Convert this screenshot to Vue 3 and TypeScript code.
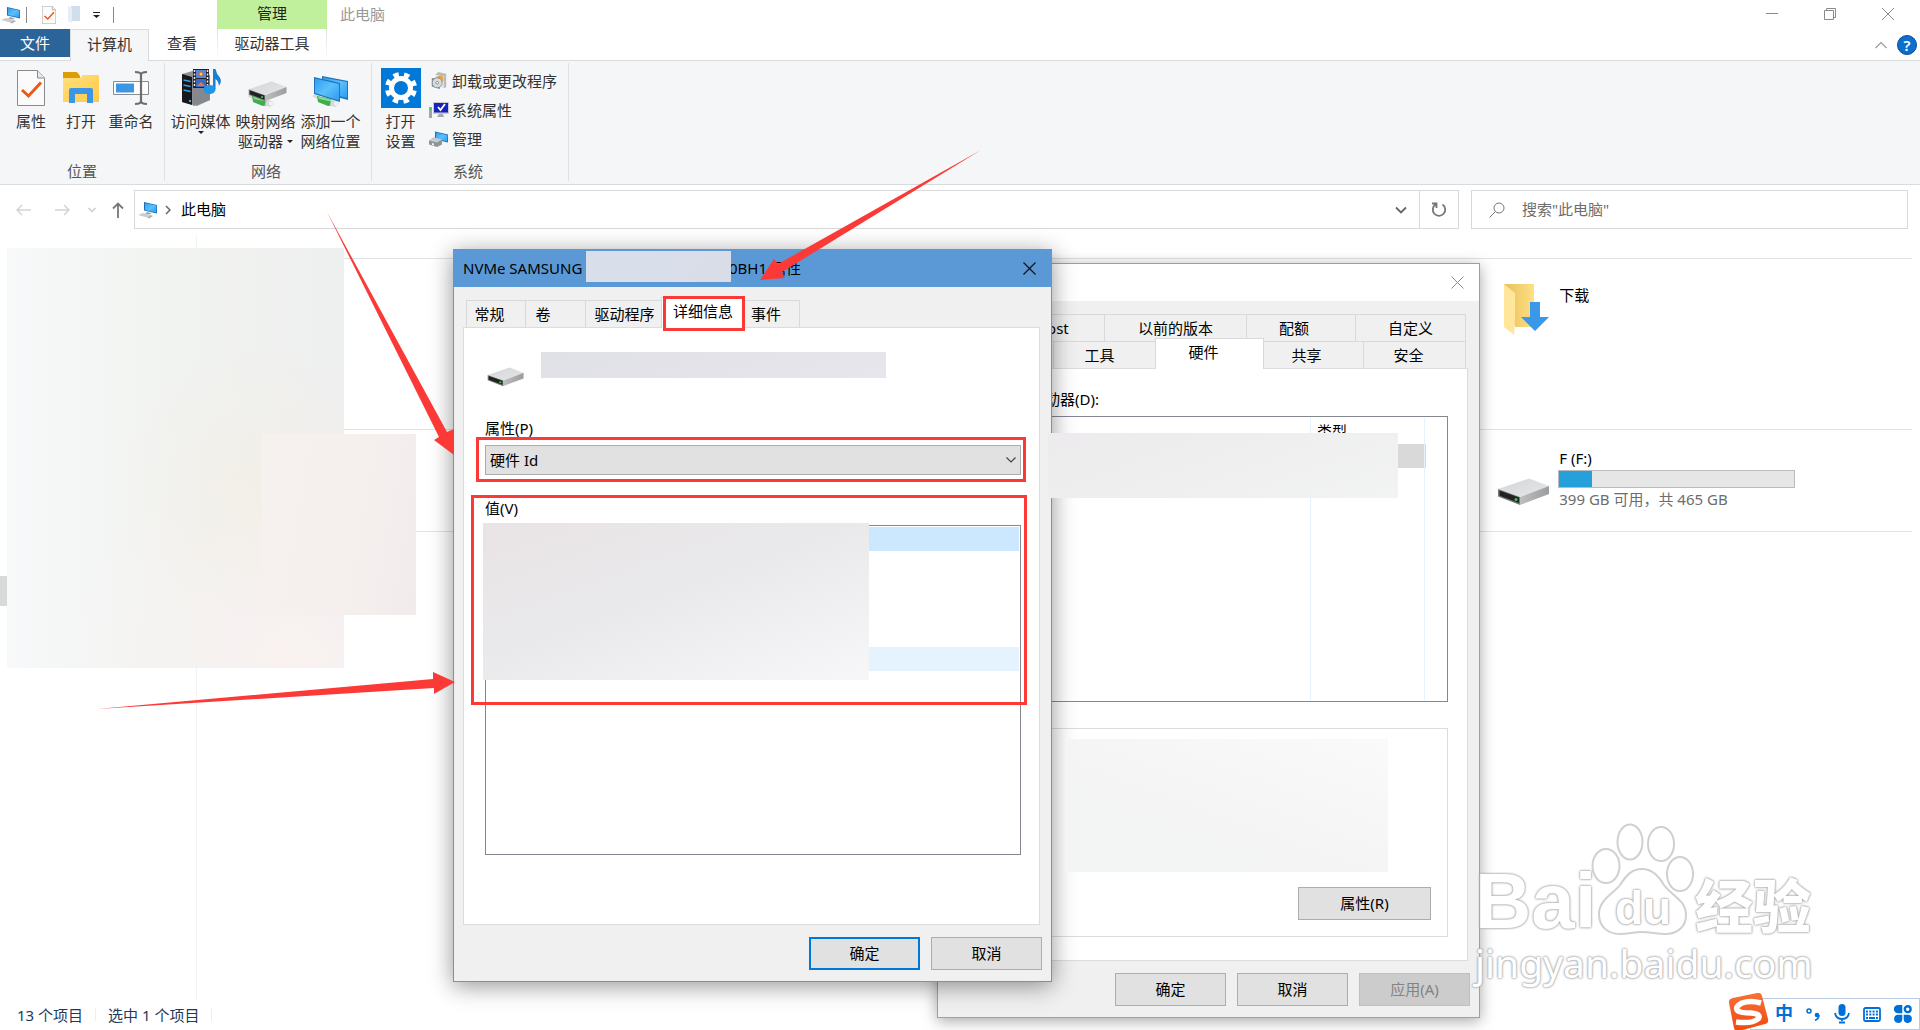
<script setup lang="ts">
import { ref } from 'vue'

interface SmallAction {
  icon: string
  label: string
}

const smallActions: SmallAction[] = [
  { icon: 'uninstall', label: '卸载或更改程序' },
  { icon: 'sysprops', label: '系统属性' },
  { icon: 'manage', label: '管理' },
]

const detailTabs = [
  { label: '常规', cls: 'w-general' },
  { label: '卷', cls: 'w-volume' },
  { label: '驱动程序', cls: 'w-driver' },
  { label: '详细信息', cls: 'w-detail' },
  { label: '事件', cls: 'w-event' },
]
const activeDetail = ref('详细信息')

const property = ref('硬件 Id')
const usedPercent = 14
const valueRows = ['selected', '', '', '', '', 'hovered']
</script>

<template>
  <div class="desktop">
    <svg class="defs" width="0" height="0" aria-hidden="true">
      <defs>
        <linearGradient id="gScreen" x1="0" y1="0" x2="1" y2="1">
          <stop offset="0" stop-color="#2f9df0" /><stop offset=".5" stop-color="#5cc0fb" /><stop offset="1" stop-color="#2c9cf0" />
        </linearGradient>
        <linearGradient id="gTop" x1="0" y1="0" x2="1" y2="1">
          <stop offset="0" stop-color="#d4d5d7" /><stop offset="1" stop-color="#e6e7e9" />
        </linearGradient>
        <linearGradient id="gSide" x1="0" y1="0" x2="1" y2="0">
          <stop offset="0" stop-color="#bdbec0" /><stop offset="1" stop-color="#9c9d9f" />
        </linearGradient>
        <linearGradient id="gFolder" x1="0" y1="0" x2="1" y2="1">
          <stop offset="0" stop-color="#ffe07c" /><stop offset="1" stop-color="#ffc94a" />
        </linearGradient>
        <linearGradient id="gFolderBack" x1="0" y1="0" x2="1" y2="0">
          <stop offset="0" stop-color="#e8bf5c" /><stop offset="1" stop-color="#ffe083" />
        </linearGradient>
        <linearGradient id="gOrange" x1="0" y1="0" x2="0" y2="1">
          <stop offset="0" stop-color="#f8703a" /><stop offset="1" stop-color="#f04a0c" />
        </linearGradient>
        <symbol id="pc" viewBox="0 0 20 18">
          <path d="M6 1 19 4v8.500L6 9.500z" fill="#1d6fb5" />
          <path d="M7 2l11.300 2.600v7L7 9z" fill="url(#gScreen)" />
          <path d="M9 11l5 1.500-3 1-4-1z" fill="#9aa3ab" />
          <path d="M0 14l5-2 8 2-4 2.500z" fill="#c9ced3" /><path d="M9 16.500 13 14l2 1-4 2.500z" fill="#aab1b8" />
        </symbol>
        <symbol id="drive" viewBox="0 0 54 28">
          <path d="M1 11 32 0.500 52 8 23 19z" fill="url(#gTop)" />
          <path d="M23 19 52 8v8L23 27z" fill="url(#gSide)" />
          <path d="M1 11l22 8v8L1 18.500z" fill="#77797b" />
          <path d="M2.500 12.500 22 19.500v5.500L2.500 17.800z" fill="#222" />
          <circle cx="19" cy="21.500" r="1.500" fill="#34d13c" />
        </symbol>
        <symbol id="netbase" viewBox="0 0 30 14">
          <path d="M1 3l4-2 5 2-4 3z" fill="#d9dbdd" /><path d="M6 3l14 3 2 6-5 1L7 9z" fill="#3fae4b" />
          <path d="M7 3.500l13 3v2L8 6z" fill="#86dd8c" />
          <path d="M20 7l6 1 2 3-4 3-5-2z" fill="#d6d8da" /><circle cx="25" cy="10.500" r="2" fill="#f5f5f5" />
        </symbol>
        <symbol id="doc" viewBox="0 0 28 36">
          <path d="M.5.5h20L27.500 8v27.500H.5z" fill="#fbfbfb" stroke="#8b8b8b" />
          <path d="M20.500.5V8h7" fill="#e8e8e8" stroke="#8b8b8b" />
          <path d="M5 20l6.500 6L24 12.500" fill="none" stroke="#ea5a14" stroke-width="3" />
        </symbol>
        <symbol id="uninstall" viewBox="0 0 18 20">
          <path d="M5 3l3-3 9 2v15l-3 1V5z" fill="#b9bbbd" /><path d="M5 3l9 2v13l-9-2z" fill="#e7e7e7" />
          <circle cx="10" cy="8" r="4" fill="#f2a23a" /><path d="M1 7l9-1v13l-9-3z" fill="#79868c" />
          <circle cx="7" cy="12" r="5.500" fill="#d5dce0" stroke="#87939a" /><circle cx="7" cy="12" r="1.500" fill="#fff" stroke="#888" />
        </symbol>
        <symbol id="sysprops" viewBox="0 0 20 18">
          <path d="M0 6h3v11H0z" fill="#9fa5a8" /><path d="M1 7h1v2H1z" fill="#2bd12b" />
          <path d="M4 1h16v12H4z" fill="#c9cdd2" /><path d="M5 2h14v9.500H5z" fill="#1723bb" />
          <path d="M9 6l2.500 3L16 3" fill="none" stroke="#fff" stroke-width="1.800" />
          <path d="M10 13h4l1 3H8z" fill="#a6abb0" />
        </symbol>
        <symbol id="manage" viewBox="0 0 20 17">
          <path d="M6 1l13 3v8L6 9z" fill="#1d6fb5" /><path d="M7 2l11.300 2.700v6.400L7 8.500z" fill="url(#gScreen)" />
          <path d="M0 10l5-3 8 2v5l-5 2.500L0 14z" fill="#8d959c" /><path d="M0 10l5-3 8 2-5 3z" fill="#c5cacf" />
          <path d="M3 12.500l2 .6v2l-2-.6z" fill="#eee" />
        </symbol>
      </defs>
    </svg>

    <div class="explorer">
      <header class="titlebar">
        <div class="quick">
          <svg width="20" height="18"><use href="#pc" /></svg>
          <i class="qsep"></i>
          <svg class="q-doc" width="14" height="18"><use href="#doc" /></svg>
          <svg class="q-folder" width="13" height="17" viewBox="0 0 13 17"><path d="M3 0h9v15H3z" fill="#d2deec" /><path d="M0 0l4 2v15l-4-2z" fill="#e6edf6" /></svg>
          <svg class="q-more" width="7" height="6" viewBox="0 0 7 6"><path d="M0 0h7v1H0zM0 3h7L3.500 6z" fill="#222" /></svg>
          <i class="qsep"></i>
        </div>
        <div class="context-head">管理</div>
        <div class="win-title">此电脑</div>
        <div class="win-buttons">
          <button aria-label="最小化"><svg width="12" height="12" viewBox="0 0 12 12"><path d="M0 5.500h12" stroke="#8a8a8a" /></svg></button>
          <button aria-label="还原"><svg width="12" height="12" viewBox="0 0 12 12"><path d="M.5 2.500h9v9h-9zM2.500 2.500v-2h9v9h-2" fill="none" stroke="#8a8a8a" /></svg></button>
          <button aria-label="关闭"><svg width="12" height="12" viewBox="0 0 12 12"><path d="M0 0l12 12M12 0 0 12" stroke="#8a8a8a" /></svg></button>
        </div>
      </header>

      <nav class="ribbon-tabs">
        <button class="rt file">文件</button>
        <button class="rt computer">计算机</button>
        <button class="rt view">查看</button>
        <button class="rt tools">驱动器工具</button>
        <div class="ribbon-end">
          <svg width="12" height="8" viewBox="0 0 12 8"><path d="M.5 7 6 1.500 11.500 7" fill="none" stroke="#9a9a9a" stroke-width="1.200" /></svg>
          <span class="help">?</span>
        </div>
      </nav>

      <section class="ribbon">
        <div class="group g-place">
          <div class="actions">
            <button class="big"><svg width="28" height="36"><use href="#doc" /></svg><span>属性</span></button>
            <button class="big">
              <svg width="36" height="32" viewBox="0 0 36 32"><path d="M0 0h14l3 4v4H0z" fill="#dd9c08" /><path d="M0 6h17l3-3h16v27H0z" fill="url(#gFolder)" /><path d="M6 31V18q0-2 2-2h20q2 0 2 2v13h-6v-9H12v9z" fill="#3b97e3" /></svg>
              <span>打开</span>
            </button>
            <button class="big">
              <svg width="36" height="34" viewBox="0 0 36 34"><path d="M.5 10.500h35v13H.5z" fill="#fff" stroke="#8b8b8b" /><path d="M3 12.500h18v9H3z" fill="#3b97e3" /><path d="M28 3v28M22 1q6 0 6 3 0-3 6-3M22 33q6 0 6-3 0 3 6 3" fill="none" stroke="#6e6e6e" stroke-width="2.200" /></svg>
              <span>重命名</span>
            </button>
          </div>
          <div class="caption">位置</div>
        </div>

        <div class="group g-net">
          <div class="actions">
            <button class="big media">
              <svg width="40" height="40" viewBox="0 0 40 40">
                <path d="M1 6l14-4 14 5v25l-13 6L1 34z" fill="#8f9296" /><path d="M1 6l10 3v28L1 34z" fill="#16181b" /><path d="M11 9l18-2v25l-17 6z" fill="#85888d" />
                <path d="M2.500 12l7 1.500M2.500 17l7 1.500M2.500 22l7 1.500" stroke="#3aa0e8" stroke-width="1.500" /><circle cx="9" cy="33" r="1" fill="#6cd6ff" />
                <path d="M12 1h16v19H12z" fill="#222" /><path d="M15 2h10v8H15z" fill="#5a86d8" /><path d="M15 11h10v8H15z" fill="#3d69c4" /><path d="M16 8l4-5 4 5z" fill="#e0593a" /><path d="M16 18l4-4 4 4z" fill="#e8763a" /><circle cx="20" cy="6" r="1.500" fill="#ffd53a" />
                <path d="M13.500 2v17M26.500 2v17" stroke="#eee" stroke-width="1.500" stroke-dasharray="2 1.500" />
                <path d="M32 1h2.500q1 5 4 8 3 4-.5 9-.5-5-3.500-7V21H32z" fill="#1582d3" /><ellipse cx="28.500" cy="21.500" rx="6" ry="4.500" fill="#2196e8" />
              </svg>
              <span>访问媒体</span>
              <svg class="caret" width="6" height="3" viewBox="0 0 6 3"><path d="M0 0h6L3 3z" fill="#222" /></svg>
            </button>
            <button class="big">
              <span class="stack"><svg class="nb" width="30" height="14"><use href="#netbase" /></svg><svg class="dr" width="40" height="21"><use href="#drive" /></svg></span>
              <span>映射网络<br />驱动器<svg class="inline-caret" width="6" height="3" viewBox="0 0 6 3"><path d="M0 0h6L3 3z" fill="#222" /></svg></span>
            </button>
            <button class="big">
              <span class="stack"><svg class="nb" width="30" height="14"><use href="#netbase" /></svg>
                <svg class="mon" width="36" height="28" viewBox="0 0 36 28"><path d="M9 1l26 5v19L9 18z" fill="#1c74bc" /><path d="M10 2.500 34 7v16L10 17z" fill="url(#gScreen)" /><path d="M1 2l26 6v19L1 19z" fill="#1c74bc" /><path d="M2 3.500l24 5.500v16.500L2 18z" fill="url(#gScreen)" /></svg></span>
              <span>添加一个<br />网络位置</span>
            </button>
          </div>
          <div class="caption">网络</div>
        </div>

        <div class="group g-sys">
          <div class="actions">
            <button class="big">
              <svg width="40" height="40" viewBox="0 0 40 40"><path d="M0 0h40v40H0z" fill="#0078d7" /><circle cx="20" cy="20" r="9.500" fill="none" stroke="#fff" stroke-width="5" /><circle cx="20" cy="20" r="13.500" fill="none" stroke="#fff" stroke-width="5" stroke-dasharray="5.300 5.303" stroke-dashoffset="-2.650" /></svg>
              <span>打开<br />设置</span>
            </button>
            <ul class="small-list">
              <li v-for="a in smallActions" :key="a.label">
                <button class="small"><svg width="20" height="18"><use :href="'#' + a.icon" /></svg><span>{{ a.label }}</span></button>
              </li>
            </ul>
          </div>
          <div class="caption">系统</div>
        </div>
      </section>

      <div class="address-row">
        <div class="nav-arrows">
          <button aria-label="后退"><svg width="16" height="12" viewBox="0 0 16 12"><path d="M15 6H1M6 1 1 6l5 5" fill="none" stroke="#d4d4d4" stroke-width="1.500" /></svg></button>
          <button aria-label="前进"><svg width="16" height="12" viewBox="0 0 16 12"><path d="M1 6h14M10 1l5 5-5 5" fill="none" stroke="#d4d4d4" stroke-width="1.500" /></svg></button>
          <button aria-label="最近"><svg width="8" height="6" viewBox="0 0 8 6"><path d="M.5 1 4 4.500 7.500 1" fill="none" stroke="#ccc" stroke-width="1.500" /></svg></button>
          <button aria-label="上移"><svg width="12" height="16" viewBox="0 0 12 16"><path d="M6 16V1M1 6.500 6 1.500l5 5" fill="none" stroke="#777" stroke-width="1.800" /></svg></button>
        </div>
        <div class="address">
          <svg width="20" height="18"><use href="#pc" /></svg>
          <svg class="crumb" width="6" height="10" viewBox="0 0 6 10"><path d="M1 1l4 4-4 4" fill="none" stroke="#666" stroke-width="1.500" /></svg>
          <span class="path">此电脑</span>
          <button class="drop" aria-label="历史"><svg width="12" height="8" viewBox="0 0 12 8"><path d="M1 1.500l5 5 5-5" fill="none" stroke="#666" stroke-width="1.800" /></svg></button>
          <button class="refresh" aria-label="刷新"><svg width="16" height="16" viewBox="0 0 16 16"><path d="M11.500 2.500a6.200 6.200 0 1 1-7 0M1 1.500h4.500V6" fill="none" stroke="#777" stroke-width="1.800" /></svg></button>
        </div>
        <label class="search">
          <svg width="16" height="16" viewBox="0 0 16 16"><circle cx="10" cy="6" r="5" fill="none" stroke="#777" /><path d="M6.500 9.500.5 15.500" stroke="#777" /></svg>
          <input type="text" placeholder='搜索"此电脑"' aria-label="搜索" />
        </label>
      </div>

      <main class="body">
        <aside class="nav-pane"><div class="nav-selected"></div></aside>
        <div class="content">
          <section class="band folders">
            <div class="tile">
              <svg width="46" height="52" viewBox="0 0 46 52"><path d="M1 1h30v43H12z" fill="url(#gFolderBack)" /><path d="M1 1l11 9v25l-1 17-10-8z" fill="#ffe69b" /><path d="M27 19h10v15h9L32 48 18 34h9z" fill="#3b97e8" /></svg>
              <div class="tile-text">下载</div>
            </div>
          </section>
          <section class="band drives">
            <div class="tile">
              <svg width="54" height="28"><use href="#drive" /></svg>
              <div class="tile-text">
                <div class="drive-name">F (F:)</div>
                <div class="usage"><div :style="{ width: usedPercent + '%' }"></div></div>
                <div class="muted">399 GB 可用，共 465 GB</div>
              </div>
            </div>
          </section>
          <section class="band"></section>
        </div>
      </main>

      <footer class="status"><span>13 个项目</span><i></i><span>选中 1 个项目</span><i></i></footer>
    </div>

    <!-- Drive properties window, behind -->
    <section class="dialog back">
      <header class="dlg-title"><span></span>
        <button aria-label="关闭"><svg width="13" height="13" viewBox="0 0 13 13"><path d="M.5.5l12 12M12.500.5l-12 12" stroke="#8a8a8a" /></svg></button>
      </header>
      <div class="dlg-body">
        <div class="tabs row1">
          <button class="tab r1a">ReadyBoost</button><button class="tab r1b">以前的版本</button><button class="tab r1c">配额</button><button class="tab r1d">自定义</button>
        </div>
        <div class="tabs row2">
          <button class="tab r2a">常规</button><button class="tab r2b">工具</button><button class="tab r2c active">硬件</button><button class="tab r2d">共享</button><button class="tab r2e">安全</button>
        </div>
        <div class="panel hw">
          <div class="hw-label">所有磁盘驱动器(D):</div>
          <div class="hw-list">
            <table>
              <thead><tr><th class="c-name"></th><th class="c-type">类型</th><th></th></tr></thead>
              <tbody><tr class="picked"><td></td><td></td><td></td></tr><tr><td></td><td></td><td></td></tr></tbody>
            </table>
          </div>
          <div class="hw-group"><button class="btn wide">属性(R)</button></div>
        </div>
        <footer class="dlg-buttons">
          <button class="btn">确定</button><button class="btn">取消</button><button class="btn" disabled>应用(A)</button>
        </footer>
      </div>
    </section>

    <!-- Device properties window, in front -->
    <section class="dialog front">
      <header class="dlg-title">
        <span class="dlg-name"><span class="name">NVMe SAMSUNG</span>0BH1 属性</span>
        <button aria-label="关闭"><svg width="13" height="13" viewBox="0 0 13 13"><path d="M.5.5l12 12M12.500.5l-12 12" stroke="#111" stroke-width="1.200" /></svg></button>
      </header>
      <div class="dlg-body">
        <div class="tabs row2" role="tablist">
          <button v-for="t in detailTabs" :key="t.label" role="tab" class="tab" :class="[t.cls, { active: t.label === activeDetail }]" @click="activeDetail = t.label">{{ t.label }}</button>
        </div>
        <div class="panel detail">
          <svg class="dev" width="38" height="20"><use href="#drive" /></svg>
          <label class="field-label" for="prop">属性(P)</label>
          <div class="select-wrap">
            <select id="prop" v-model="property"><option>硬件 Id</option></select>
            <svg width="10" height="6" viewBox="0 0 10 6"><path d="M.5.5 5 5 9.500.5" fill="none" stroke="#444" stroke-width="1.200" /></svg>
          </div>
          <div id="values-label" class="field-label values-label">值(V)</div>
          <ul class="values" role="listbox" aria-labelledby="values-label">
            <li v-for="(row, i) in valueRows" :key="i" role="option" :class="row"></li>
          </ul>
        </div>
        <footer class="dlg-buttons">
          <button class="btn primary">确定</button><button class="btn">取消</button>
        </footer>
      </div>
    </section>

    <!-- Redaction patches, frames and arrows -->
    <div class="mask m-nav"></div>
    <div class="mask m-tiles"></div>
    <div class="mask m-title"></div>
    <div class="mask m-device"></div>
    <div class="mask m-values"></div>
    <div class="mask m-drives"></div>
    <div class="mask m-info"></div>
    <div class="frame f-tab"></div>
    <div class="frame f-select"></div>
    <div class="frame f-values"></div>
    <svg class="arrows" width="1000" height="720" viewBox="0 0 1000 720" fill="#fb3a38">
      <path d="M327 212 447 432l7-3v26l-20-15 5-3z" />
      <path d="M981 150 782 272l3 6-25 2 14-21 4 5z" />
      <path d="M97 709l336-30v-7l22 10-21 12v-6z" />
    </svg>

    <div class="watermark">
      <div class="wm-top">
        <span class="wm-bai">Bai</span>
        <span class="wm-paw">
          <svg width="104" height="114" viewBox="0 0 104 114" fill="#fff" stroke="#d0d0d0" stroke-width="2">
            <ellipse cx="15" cy="43" rx="13.500" ry="17" /><ellipse cx="39" cy="19" rx="12.500" ry="17.500" /><ellipse cx="70" cy="21" rx="13" ry="17" /><ellipse cx="89" cy="51" rx="13" ry="17" />
            <path d="M51 46c11 0 17 8 22 16 8 11 22 15 22 30 0 13-10 19-21 19-9 0-14-2-23-2s-13 2-22 2c-12 0-21-7-21-20 0-14 14-20 21-29 6-9 11-16 22-16z" />
          </svg>
          <span class="wm-du">du</span>
        </span>
        <span class="wm-jy">经验</span>
      </div>
      <div class="wm-url">jingyan.baidu.com</div>
    </div>

    <div class="ime">
      <svg class="sogou" width="40" height="38" viewBox="0 0 40 38"><path d="M4 5 28 0q4-1 5 3l6 23q1 4-3 5L10 38q-4 1-5-3L0 10q-1-4 4-5z" fill="url(#gOrange)" /><path d="M32 10q-11-3-19 0-8 4-4 8 3 2 13 2 11 1 7 6-6 5-22 3" fill="none" stroke="#fff" stroke-width="5.500" /></svg>
      <button class="zh" aria-label="中文">中</button>
      <button aria-label="标点"><svg width="14" height="13" viewBox="0 0 14 13"><circle cx="3" cy="3" r="2" fill="none" stroke="#0070d8" stroke-width="1.500" /><circle cx="11" cy="7" r="2.300" fill="#0070d8" /><path d="M13 7q0 4-4 5.500" fill="none" stroke="#0070d8" stroke-width="1.500" /></svg></button>
      <button aria-label="语音"><svg width="16" height="20" viewBox="0 0 16 20"><rect x="4.500" y="0" width="7" height="12" rx="3.500" fill="#0070d8" /><path d="M1 9q1 6 7 6t7-6M8 15v2M5 18.500h6" fill="none" stroke="#0070d8" stroke-width="1.800" /></svg></button>
      <button aria-label="键盘"><svg width="18" height="15" viewBox="0 0 18 15"><rect x="1" y="1" width="16" height="13" rx="1.500" fill="none" stroke="#0070d8" stroke-width="1.800" /><path d="M3 4.500h12M3 7.500h12" stroke="#0070d8" stroke-width="2" stroke-dasharray="2 1.300" /><path d="M3 11h2M6 11h6M13 11h2" stroke="#0070d8" stroke-width="1.800" /></svg></button>
      <button aria-label="工具箱"><svg width="18" height="18" viewBox="0 0 18 18"><path d="M4 0h4.300v8.300H4A4.100 4.100 0 0 1 4 0zM4 9.700h4.300V14A4.100 4.100 0 1 1 4 9.700zM9.700 9.700H14A4.100 4.100 0 1 1 9.700 14z" fill="#0070d8" /><circle cx="13.700" cy="4.200" r="2.900" fill="none" stroke="#0070d8" stroke-width="2.400" /></svg></button>
    </div>
  </div>
</template>

<style>
body {
  background: #fff;
}
</style>

<style scoped>
.desktop {
  position: relative;
  min-height: 100vh;
  overflow: hidden;
  font: 15px/20px 'Noto Sans', 'Noto Sans CJK SC', sans-serif;
  color: #000;
}
.desktop *, .desktop {
  box-sizing: border-box;
}
.defs {
  position: absolute;
}
svg {
  display: block;
  flex: none;
}
button {
  font: inherit;
  color: inherit;
  border: 0;
  padding: 0;
  background: none;
  white-space: nowrap;
}
ul {
  list-style: none;
  margin: 0;
  padding: 0;
}
.explorer {
  display: flex;
  flex-direction: column;
  min-height: 100vh;
}

/* title bar */
.titlebar {
  display: flex;
  height: 29px;
}
.quick {
  display: flex;
  align-items: center;
  width: 217px;
  padding-left: 1px;
}
.qsep {
  width: 1px;
  height: 16px;
  margin-left: 5px;
  background: #8a8a8a;
}
.q-doc {
  margin-left: 15px;
}
.q-folder {
  margin-left: 12px;
}
.q-more {
  margin: 0 8px 0 12px;
}
.context-head {
  width: 110px;
  background: #c1f09c;
  text-align: center;
  line-height: 27px;
  color: #222;
}
.win-title {
  margin-left: 13px;
  line-height: 29px;
  color: #999;
}
.win-buttons {
  display: flex;
  margin-left: auto;
}
.win-buttons button {
  display: grid;
  place-items: center;
  width: 58px;
  padding-bottom: 1px;
}
.win-buttons button:last-child {
  margin-right: 3px;
}

/* ribbon */
.ribbon-tabs {
  display: flex;
  height: 32px;
  border-bottom: 1px solid #dadbdc;
  color: #333;
}
.rt {
  height: 30px;
  padding-bottom: 2px;
}
.file {
  width: 70px;
  height: 28px;
  padding-bottom: 0;
  background: #2a6499;
  color: #fff;
}
.computer {
  width: 79px;
  height: 32px;
  padding-bottom: 4px;
  background: #f5f6f7;
  border: 1px solid #dadbdc;
  border-bottom: 0;
}
.view {
  width: 68px;
  padding-right: 2px;
}
.tools {
  width: 110px;
  border: solid transparent;
  border-width: 0 1px;
  border-image: linear-gradient(#dadbdc, #fff) 1;
}
.ribbon-end {
  display: flex;
  align-items: center;
  gap: 10px;
  margin-left: auto;
  padding-right: 3px;
}
.help {
  width: 20px;
  height: 20px;
  border: 1px solid #0b4d8f;
  border-radius: 50%;
  background: #0b6fce;
  color: #fff;
  line-height: 18px;
  text-align: center;
  font-weight: 600;
}
.ribbon {
  display: flex;
  height: 124px;
  padding: 2px 0 3px;
  background: #f5f6f7;
  border-bottom: 1px solid #dadbdc;
  color: #333;
}
.group {
  display: flex;
  flex-direction: column;
  justify-content: space-between;
  border-right: 1px solid #e0e1e2;
}
.g-place {
  width: 165px;
}
.g-net {
  width: 207px;
}
.g-sys {
  width: 197px;
}
.g-place .actions {
  padding-left: 6px;
}
.g-net .actions {
  padding-left: 3px;
}
.actions {
  display: flex;
  padding-top: 5px;
}
.big {
  display: flex;
  flex-direction: column;
  align-items: center;
  width: 65px;
}
.big > svg:first-child, .stack {
  height: 40px;
  margin-bottom: 3px;
}
.g-place .big {
  width: 50px;
}
.g-sys .big {
  width: 57px;
}
.stack {
  position: relative;
  width: 40px;
}
.stack svg {
  position: absolute;
}
.stack .nb {
  left: 0;
  top: 25px;
}
.stack .dr {
  left: 2px;
  top: 13px;
}
.stack .mon {
  left: 2px;
  top: 7px;
}
.inline-caret {
  display: inline-block;
  margin: 0 0 4px 4px;
}
.small-list li:first-child {
  margin-top: -2px;
}
.small {
  display: flex;
  align-items: center;
  gap: 3px;
  height: 29px;
}
.caption {
  text-align: center;
  color: #555;
  padding-right: 4px;
}
.g-place .caption {
  padding-right: 0;
}

/* address row */
.address-row {
  display: flex;
  height: 51px;
  padding: 5px 12px 7px 0;
}
.nav-arrows {
  display: flex;
  align-items: center;
  width: 134px;
  padding-left: 16px;
  gap: 22px;
}
.nav-arrows button:nth-child(3) {
  margin-left: -4px;
}
.nav-arrows button:nth-child(4) {
  margin-left: -6px;
}
.address {
  display: flex;
  align-items: center;
  flex: 1;
  border: 1px solid #d9d9d9;
  padding-left: 3px;
}
.crumb {
  margin: 0 10px 0 7px;
}
.path {
  padding-bottom: 2px;
}
.drop {
  margin: 0 12px 0 auto;
}
.refresh {
  display: grid;
  place-items: center;
  align-self: stretch;
  width: 39px;
  border-left: 1px solid #d9d9d9;
}
.search {
  display: flex;
  align-items: center;
  width: 437px;
  margin-left: 12px;
  padding-left: 17px;
  gap: 17px;
  border: 1px solid #d9d9d9;
}
.search input {
  flex: 1;
  min-width: 0;
  border: 0;
  padding: 0 0 2px;
  outline: 0;
  font: inherit;
}
.search input::placeholder {
  color: #6d6d6d;
  opacity: 1;
}

/* file area */
.body {
  display: flex;
  flex: 1;
}
.nav-pane {
  width: 197px;
  padding-top: 340px;
  border-right: 1px solid #f3f3f3;
}
.nav-selected {
  height: 30px;
  background: #d9d9d9;
}
.content {
  flex: 1;
  padding: 22px 8px 0 0;
}
.band {
  display: grid;
  grid-template-columns: repeat(4, 1fr);
  border-top: 1px solid #e2e2e2;
}
.folders {
  height: 171px;
  padding-top: 23px;
}
.drives {
  height: 102px;
  padding-top: 18px;
}
.tile {
  grid-column: 4;
  display: flex;
  align-items: flex-start;
  padding-left: 14px;
}
.folders .tile > svg {
  margin: 1px 10px 0 6px;
}
.drives .tile > svg {
  margin: 30px 7px 0 0;
}
.folders .tile-text {
  padding-top: 3px;
}
.drive-name, .muted {
  padding-left: 1px;
}
.usage {
  width: 237px;
  height: 18px;
  margin-top: 2px;
  border: 1px solid #bcbcbc;
  background: #e6e6e6;
}
.usage div {
  height: 100%;
  background: #26a0da;
}
.muted {
  color: #6d6d6d;
  padding-top: 1px;
}
.status {
  display: flex;
  align-items: center;
  height: 29px;
  padding: 0 0 2px 17px;
  color: #1e395b;
}
.status i {
  width: 1px;
  height: 13px;
  margin: 0 12px;
  background: #eee;
}

/* dialogs */
.dialog {
  position: absolute;
  display: flex;
  flex-direction: column;
  background: #f0f0f0;
  border: 1px solid #9f9f9f;
}
.back {
  left: 937px;
  top: 263px;
  width: 543px;
  box-shadow: 0 3px 14px rgba(0, 0, 0, .35);
}
.front {
  left: 453px;
  top: 249px;
  width: 599px;
  border-color: #5b99d6;
  box-shadow: 0 4px 22px rgba(0, 0, 0, .42);
}
.dlg-title {
  display: flex;
  align-items: center;
  justify-content: space-between;
  height: 37px;
  padding: 0 15px 0 9px;
  background: #fff;
}
.front .dlg-title {
  background: #5b99d6;
}
.dlg-name {
  padding-bottom: 2px;
}
.name {
  display: inline-block;
  width: 266px;
}
.dlg-body {
  padding: 13px 11px 11px 9px;
}
.tabs {
  display: flex;
  padding: 0 2px;
}
.tab {
  height: 27px;
  border: 1px solid #d9d9d9;
  border-width: 1px 1px 0 0;
  background: #f0f0f0;
}
.tab:first-child {
  border-left-width: 1px;
}
.tab.active {
  position: relative;
  height: 31px;
  margin: -3px 0 -1px -1px;
  padding-bottom: 5px;
  background: #fff;
  border-left-width: 1px;
}
.panel {
  border: 1px solid #dcdcdc;
  background: #fff;
}
.front .tabs {
  padding: 0 3px;
}
.w-general {
  width: 60px;
  padding-right: 13px;
}
.w-volume {
  width: 60px;
  padding-right: 25px;
}
.w-driver {
  width: 76px;
  padding-left: 2px;
}
.w-detail {
  width: 84px;
}
.w-event {
  width: 55px;
  padding-right: 12px;
}
.detail {
  height: 598px;
  padding: 39px 18px 0 21px;
}
.dev {
  margin-left: 2px;
}
.field-label {
  display: block;
  margin-top: 31px;
}
.select-wrap {
  display: flex;
  align-items: center;
  position: relative;
  margin-top: 7px;
}
.select-wrap select {
  appearance: none;
  width: 100%;
  height: 30px;
  padding: 0 4px;
  border: 1px solid #adadad;
  border-radius: 0;
  background: #e1e1e1;
  color: #000;
  font: inherit;
}
.select-wrap svg {
  position: absolute;
  right: 5px;
}
.values-label {
  margin-top: 23px;
}
.values {
  height: 330px;
  margin-top: 7px;
  padding: 1px;
  border: 1px solid #828790;
}
.values li {
  height: 24px;
}
.values .selected {
  background: #cce8ff;
}
.values .hovered {
  background: #e5f3ff;
}
.dlg-buttons {
  display: flex;
  justify-content: flex-end;
  gap: 11px;
  margin-right: -2px;
  padding-top: 12px;
}
.btn {
  width: 111px;
  height: 33px;
  padding-bottom: 2px;
  border: 1px solid #adadad;
  background: #e1e1e1;
}
.btn.primary {
  border: 2px solid #0078d7;
}
.btn:disabled {
  border-color: #bfbfbf;
  background: #ccc;
  color: #838383;
}
.btn.wide {
  width: 133px;
}
.r1a {
  width: 156px;
}
.r1b {
  width: 142px;
}
.r1c {
  width: 109px;
  padding-right: 14px;
}
.r1d {
  flex: 1;
}
.r2a {
  width: 105px;
}
.r2b {
  width: 102px;
  padding-right: 10px;
}
.r2c {
  width: 109px;
  padding-right: 12px;
}
.r2d {
  width: 100px;
  padding-right: 14px;
}
.r2e {
  flex: 1;
  padding-right: 12px;
}
.hw {
  height: 593px;
  padding: 20px 19px 0;
}
.hw-label {
  padding-left: 3px;
}
.hw-list {
  height: 286px;
  margin-top: 7px;
  border: 1px solid #828790;
  padding: 1px 22px 1px 1px;
}
.hw-list table {
  width: 100%;
  height: 100%;
  border-collapse: collapse;
}
.hw-list th, .hw-list td {
  padding: 0 0 0 6px;
  border-right: 1px solid #e5f1fb;
  text-align: left;
  font-weight: 400;
}
.hw-list th:last-child, .hw-list td:last-child {
  width: 0;
  padding: 0;
  border: 0;
}
.hw-list thead tr {
  height: 26px;
}
.c-type {
  width: 114px;
}
.hw-list .picked {
  height: 24px;
  background: #d9d9d9;
}
.hw-group {
  display: flex;
  justify-content: flex-end;
  align-items: flex-end;
  height: 209px;
  margin-top: 26px;
  padding: 0 16px 16px;
  border: 1px solid #dcdcdc;
}

/* annotations */
.mask, .frame, .arrows {
  position: absolute;
}
.m-nav {
  left: 7px;
  top: 248px;
  width: 337px;
  height: 420px;
  background: radial-gradient(circle at 75% 57%, rgba(243, 238, 230, .8) 0, rgba(243, 238, 230, 0) 40%), radial-gradient(circle at 85% 98%, #f9f2f1 0, rgba(249, 242, 241, 0) 45%), linear-gradient(90deg, #f7f9fa, #f1f3f0 50%, #eeefef);
}
.m-tiles {
  left: 261px;
  top: 434px;
  width: 155px;
  height: 181px;
  background: linear-gradient(100deg, #f5f1ed, #f5f0ee 55%, #f2ebec);
}
.m-title {
  left: 586px;
  top: 251px;
  width: 145px;
  height: 31px;
  background: linear-gradient(120deg, #d8dfeb, #d9dde8);
}
.m-device {
  left: 541px;
  top: 352px;
  width: 345px;
  height: 26px;
  background: linear-gradient(160deg, #e0e0e7, #e7e6ec);
}
.m-values {
  left: 483px;
  top: 523px;
  width: 386px;
  height: 157px;
  background: linear-gradient(160deg, #e9e4e5, #e9e9eb 45%, #f7f7f9);
}
.m-drives {
  left: 1048px;
  top: 433px;
  width: 350px;
  height: 65px;
  background: linear-gradient(160deg, #edebed, #efefef 50%, #f2f3f3);
}
.m-info {
  left: 1065px;
  top: 739px;
  width: 323px;
  height: 133px;
  background: linear-gradient(200deg, #fafafa, #f4f4f4 60%, #f3f4f4);
}
.frame {
  border: 3px solid #fb3a38;
}
.f-tab {
  left: 663px;
  top: 296px;
  width: 82px;
  height: 35px;
}
.f-select {
  left: 476px;
  top: 437px;
  width: 550px;
  height: 45px;
}
.f-values {
  left: 471px;
  top: 495px;
  width: 556px;
  height: 210px;
}
.arrows {
  left: 0;
  top: 0;
}

/* watermark */
.watermark {
  position: absolute;
  right: 101px;
  bottom: 41px;
  width: 344px;
  color: #fff;
  text-shadow: 0 0 2px #aaa, 0 0 2px #aaa, 0 0 3px #bbb;
}
.wm-top {
  display: flex;
  align-items: flex-end;
  height: 114px;
}
.wm-bai {
  width: 116px;
  font: 700 78px/72px 'Liberation Sans', sans-serif;
}
.wm-paw {
  position: relative;
  width: 104px;
}
.wm-du {
  position: absolute;
  left: 24px;
  top: 60px;
  font: 700 46px/50px 'Liberation Sans', sans-serif;
}
.wm-jy {
  font: 900 58px/68px 'Noto Sans CJK SC', sans-serif;
}
.wm-url {
  font: 39px/52px 'Noto Sans', sans-serif;
  white-space: nowrap;
}

/* input method bar */
.ime {
  position: absolute;
  right: 0;
  bottom: 0;
  display: flex;
  align-items: center;
  width: 170px;
  height: 32px;
  padding: 0 7px 0 24px;
  justify-content: space-between;
  border: 1px solid #b9cae4;
  background: #fff;
  color: #0070d8;
}
.sogou {
  position: absolute;
  left: -22px;
  bottom: -2px;
}
.zh {
  padding-bottom: 2px;
  font-size: 18px;
  font-weight: 700;
}
</style>
